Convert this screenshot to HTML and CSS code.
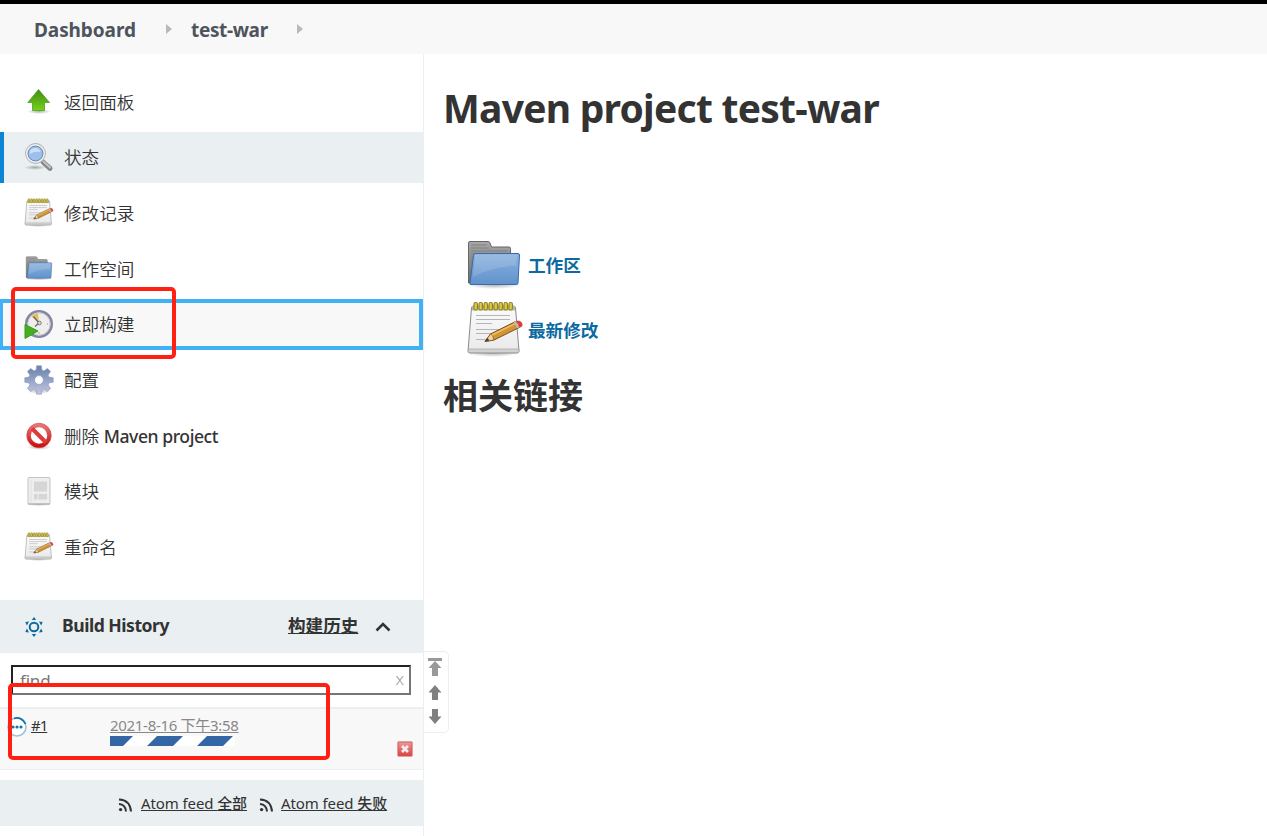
FILE: index.html
```html
<!DOCTYPE html>
<html lang="zh-CN">
<head>
<meta charset="utf-8">
<title>test-war [Jenkins]</title>
<link rel="stylesheet" href="styles.css">
</head>
<body>
<svg class="defs" width="0" height="0" aria-hidden="true">
  <defs>
    <linearGradient id="green" x1="0" y1="0" x2="0" y2="1"><stop offset="0" stop-color="#3f8b16"/><stop offset="1" stop-color="#73d216"/></linearGradient>
    <linearGradient id="blue" x1="0" y1="0" x2="0" y2="1"><stop offset="0" stop-color="#8db3df"/><stop offset="1" stop-color="#5f92cc"/></linearGradient>
    <linearGradient id="gray" x1="0" y1="0" x2="0" y2="1"><stop offset="0" stop-color="#a8a8a8"/><stop offset="1" stop-color="#6a6a6a"/></linearGradient>
    <linearGradient id="paper" x1="0" y1="0" x2="0" y2="1"><stop offset="0" stop-color="#fbfbfb"/><stop offset="1" stop-color="#e9e9e9"/></linearGradient>
    <linearGradient id="gear" x1="0" y1="0" x2="0" y2="1"><stop offset="0" stop-color="#6580ae"/><stop offset="1" stop-color="#c5c5e0"/></linearGradient>
    <linearGradient id="red" x1="0" y1="0" x2="0" y2="1"><stop offset="0" stop-color="#e87474"/><stop offset="1" stop-color="#cc1111"/></linearGradient>
    <linearGradient id="stop" x1="0" y1="0" x2="0" y2="1"><stop offset="0" stop-color="#eba0a0"/><stop offset="1" stop-color="#d93c3c"/></linearGradient>
    <radialGradient id="shade"><stop offset="0" stop-color="#000" stop-opacity=".3"/><stop offset="1" stop-color="#000" stop-opacity="0"/></radialGradient>
    <symbol id="folder" viewBox="0 0 54 50">
      <ellipse cx="27" cy="45" rx="27" ry="4" fill="url(#shade)"/>
      <path d="M1.500 43V3q0-1.500 1.500-1.500h18q1.500 0 2 1.500l1.500 4H42q1.500 0 1.500 1.500V43z" fill="url(#gray)" stroke="#666"/>
      <path d="M4 5h16M4 8h18M4 11h37M4 14h3M4 17h2M4 20h2M4 23h2M4 26h2M4 29h1" stroke="#7a7a7a" stroke-width=".8"/>
      <path d="M6.500 15.500q0-2 1.500-2h43q1.500 0 1.500 1.500l-1.500 28q0 1.500-1.500 1.500H4q-1.500 0-1-1.500z" fill="url(#blue)" stroke="#3a6aa9"/>
      <path d="M8 16q0-1.500 1-1.500h41l-.8 11Q25 27 6 37z" fill="#fff" opacity=".13"/>
    </symbol>
    <symbol id="notepad" viewBox="0 0 56 56">
      <ellipse cx="26" cy="52" rx="26" ry="4" fill="url(#shade)"/>
      <path d="M6.500 5h40q2 0 2 2l3.500 43q0 2-2 2H3q-2 0-2-2L4.500 7q0-2 2-2z" fill="url(#paper)" stroke="#8a8a8a"/>
      <path d="M1.500 48h50.300l.2 2q0 1.500-1.500 1.500H2.500Q.8 51.500 1.300 50z" fill="#d2d2d2" stroke="#a5a5a5" stroke-width=".7"/>
      <path d="M5 5h43v4.500H5z" fill="#b8b8a8"/>
      <g fill="#dccb48" stroke="#8f8020" stroke-width="1.100"><rect x="7" y="1.500" width="3.400" height="7.500" rx="1.400"/><rect x="12" y="1.500" width="3.400" height="7.500" rx="1.400"/><rect x="17" y="1.500" width="3.400" height="7.500" rx="1.400"/><rect x="22" y="1.500" width="3.400" height="7.500" rx="1.400"/><rect x="27" y="1.500" width="3.400" height="7.500" rx="1.400"/><rect x="32" y="1.500" width="3.400" height="7.500" rx="1.400"/><rect x="37" y="1.500" width="3.400" height="7.500" rx="1.400"/><rect x="42" y="1.500" width="3.400" height="7.500" rx="1.400"/></g>
      <path d="M9 14.500h34M9 18.500h34M9 22.500h16M9 28.500h26M9 32.500h20M9 38.500h12" stroke="#b5b5b5" stroke-width="1.200"/>
      <path d="M18 40.500l5.500-7.500L48 20.800q3 1 4.300 5.700L27 39z" fill="#d29435" stroke="#785018"/>
      <path d="M18 40.500l5.500-7.500q3 1.500 3.500 6z" fill="#efd3a0" stroke="#785018" stroke-width=".7"/><path d="M18 40.500l2.500-3.500 1.800 2.300z" fill="#333"/>
      <path d="M25 34l23-11.300" stroke="#f0bf66" stroke-width="1.500"/>
      <path d="M46.500 21.500l2.500-1.200 4 5.700-2.500 1.300z" fill="#bbb"/><path d="M49 20.300q5.500-1.500 6.300 3.700l-.8 1.500-2 1q-.5-4-3.500-6.200z" fill="#e33b35" stroke="#c93a34" stroke-width=".6"/>
    </symbol>
    <symbol id="feed" viewBox="0 0 14 14"><circle cx="2.600" cy="11.600" r="1.700" fill="#333"/><path d="M1 6q6.500.5 7 7.500M1 1.500q11 .5 12 12" fill="none" stroke="#333" stroke-width="2"/></symbol>
  </defs>
</svg>

<header class="crumbs">
  <a class="crumb crumb-home">Dashboard</a>
  <svg class="sep" width="6" height="10"><path d="M0 0l6 5-6 5z" fill="#b9b9b9"/></svg>
  <a class="crumb crumb-job">test-war</a>
  <svg class="sep" width="6" height="10"><path d="M0 0l6 5-6 5z" fill="#b9b9b9"/></svg>
</header>

<div class="page">
  <aside class="side">
    <nav class="tasks">
      <a class="task">
        <svg class="icon" viewBox="0 0 30 30"><ellipse cx="15" cy="24.500" rx="12" ry="2.500" fill="url(#shade)"/><path d="M14.500 2.500L25.500 15.500H20.500v8H8.500v-8H3.800z" fill="url(#green)" stroke="#52a01c" stroke-width=".8"/></svg>
        <span>返回面板</span></a>
      <a class="task active">
        <svg class="icon" viewBox="0 0 30 30"><ellipse cx="11" cy="25.500" rx="11" ry="2.500" fill="url(#shade)"/><path d="M19 20l7 6.300" stroke="#858585" stroke-width="5" stroke-linecap="round"/><path d="M19.500 19.500l6.500 6" stroke="#c4c4c4" stroke-width="2" stroke-linecap="round"/><circle cx="11.500" cy="11.500" r="9" fill="#9dc0ea" stroke="#b0b0b0" stroke-width="2.800"/><circle cx="11.500" cy="11.500" r="8.700" fill="none" stroke="#efefef" stroke-width="1.700"/><circle cx="11.500" cy="11.500" r="7.400" fill="none" stroke="#6389c0" stroke-width=".9"/><path d="M5.500 12q0-6 6-6 4 0 5 4-6-1-11 2z" fill="#d8e8fa" opacity=".8"/></svg>
        <span>状态</span></a>
      <a class="task"><svg class="icon icon-note"><use href="#notepad"/></svg><span>修改记录</span></a>
      <a class="task"><svg class="icon icon-folder"><use href="#folder"/></svg><span>工作空间</span></a>
      <a class="task focused">
        <svg class="icon" viewBox="0 0 30 30"><circle cx="15" cy="15" r="12.700" fill="#eeeeec" stroke="#8585a6" stroke-width="2.600"/><circle cx="15" cy="15" r="11.200" fill="none" stroke="#c9c9c9"/><path d="M15 14L7.500 7.500Q10 4.500 14 4z" fill="#e5c05c"/><path d="M15 14L9.500 7.500M15 14l-4 3.500" stroke="#666" stroke-width="1.200"/><circle cx="15.500" cy="14" r="1.800" fill="#ddd" stroke="#666" stroke-width=".8"/><circle cx="23.500" cy="15" r=".7" fill="#aaa"/><path d="M15 23v2" stroke="#aaa"/><path d="M1 15.500L14 22 1 29.500z" fill="#46b01c" stroke="#3d9820"/></svg>
        <span>立即构建</span></a>
      <a class="task">
        <svg class="icon" viewBox="0 0 30 30"><ellipse cx="15" cy="26" rx="11" ry="3" fill="url(#shade)"/><path d="M12.700.8h4.600l.6 4.200 2.100.9 3.400-2.500 3.200 3.200-2.500 3.400.9 2.100 4.200.6v4.600l-4.200.6-.9 2.100 2.500 3.400-3.200 3.200-3.400-2.500-2.100.9-.6 4.200h-4.600l-.6-4.200-2.100-.9-3.400 2.500-3.200-3.200 2.500-3.400-.9-2.100-4.200-.6v-4.600l4.200-.6.9-2.100-2.500-3.400 3.200-3.200L10 5.900l2.100-.9zM15 10.600a4.400 4.400 0 1 0 0 8.800 4.400 4.400 0 1 0 0-8.800z" fill="url(#gear)" stroke="#8495ba" stroke-width=".6" fill-rule="evenodd"/></svg>
        <span>配置</span></a>
      <a class="task">
        <svg class="icon" viewBox="0 0 30 30"><ellipse cx="15" cy="26" rx="12" ry="3" fill="url(#shade)"/><circle cx="15" cy="14.500" r="10.200" fill="#fff" stroke="url(#red)" stroke-width="4"/><path d="M8 7.500l14 14" stroke="#dc3c3c" stroke-width="4"/><circle cx="15" cy="14.500" r="12.300" fill="none" stroke="#cf4040" stroke-width=".6"/></svg>
        <span>删除 <b class="latin">Maven project</b></span></a>
      <a class="task">
        <svg class="icon" viewBox="0 0 30 30"><ellipse cx="15" cy="28.500" rx="12" ry="1.500" fill="url(#shade)"/><rect x="4" y="1.500" width="22" height="26.500" rx="1" fill="#eee" stroke="#c4c4c4"/><path d="M4 28h22" stroke="#aaa"/><path d="M10 5.500h13v10H10zM10 18h3.500v5.500H10zM14.500 18H23v5.500h-8.500z" fill="#d6d6d6"/><path d="M7 4v22" stroke="#e0e0e0"/></svg>
        <span>模块</span></a>
      <a class="task"><svg class="icon icon-note"><use href="#notepad"/></svg><span>重命名</span></a>
    </nav>

    <section class="history">
      <div class="history-head">
        <svg class="sun" width="20" height="20" viewBox="0 0 20 20"><circle cx="10" cy="10" r="4.300" fill="none" stroke="#0b6aa2" stroke-width="2"/><g fill="#0b6aa2"><path id="ray" d="M7.800 3L10 0l2.200 3z"/><use href="#ray" transform="rotate(60 10 10)"/><use href="#ray" transform="rotate(120 10 10)"/><use href="#ray" transform="rotate(180 10 10)"/><use href="#ray" transform="rotate(240 10 10)"/><use href="#ray" transform="rotate(300 10 10)"/></g></svg>
        <span class="history-title">Build History</span>
        <a class="trend">构建历史</a>
        <svg class="chev" width="16" height="12" viewBox="0 0 16 12"><path d="M1.500 9.500L8 3l6.500 6.500" fill="none" stroke="#333" stroke-width="2.500"/></svg>
      </div>
      <div class="find"><span class="find-text">find</span><span class="find-clear">x</span></div>
      <div class="build">
        <svg class="ball" width="20" height="20" viewBox="0 0 20 20"><circle cx="10" cy="10" r="9" fill="#fff" stroke="#9fc3da" stroke-width="1.600"/><path d="M7 1.500A9 9 0 0 1 18.500 7" fill="none" stroke="#1375ab" stroke-width="1.800"/><g fill="#1375ab"><circle cx="6" cy="10" r="1.600"/><circle cx="10" cy="10" r="1.600"/><circle cx="14" cy="10" r="1.600"/></g></svg>
        <a class="build-no">#1</a>
        <div class="build-main">
          <a class="build-date">2021-8-16 下午3:58</a>
          <svg class="progress" width="125" height="10"><path d="M0 0h23L13 10H0zM47 0h26L63 10H37zM97 0h26l-10 10H87z" fill="#3465a4"/></svg>
        </div>
        <svg class="stop" width="16" height="16" viewBox="0 0 16 16"><rect x=".5" y=".5" width="15" height="15" rx="1.500" fill="url(#stop)" stroke="#dfa0a0"/><rect x="1.500" y="1.500" width="13" height="13" fill="none" stroke="#d95555" opacity=".5"/><path d="M5 5l6 6M11 5l-6 6" stroke="#f6eeee" stroke-width="2.600"/></svg>
      </div>
      <div class="feeds">
        <svg class="feed"><use href="#feed"/></svg><a class="feed-all">Atom feed <b>全部</b></a>
        <svg class="feed feed2"><use href="#feed"/></svg><a class="feed-fail">Atom feed <b>失败</b></a>
      </div>
    </section>
    <div class="pager">
      <svg width="14" height="18" viewBox="0 0 14 18"><path d="M0 0h14v3H0zM7 3l6.500 7H10v8H4v-8H.5z" fill="#999"/></svg>
      <svg width="14" height="15" viewBox="0 0 14 15"><path d="M7 0l6.500 7.500H10V15H4V7.500H.5z" fill="#808080"/></svg>
      <svg width="14" height="15" viewBox="0 0 14 15"><path d="M7 15l6.500-7.500H10V0H4v7.500H.5z" fill="#808080"/></svg>
    </div>
  </aside>

  <main class="main">
    <h1>Maven project test-war</h1>
    <div class="links">
      <a class="link"><svg class="big"><use href="#folder" width="54" height="50" y="3"/></svg><span class="up">工作区</span></a>
      <a class="link"><svg class="big"><use href="#notepad"/></svg><span>最新修改</span></a>
    </div>
    <h2>相关链接</h2>
  </main>
</div>
<div class="mark mark-task"></div>
<div class="mark mark-build"></div>
</body>
</html>
```

FILE: styles.css
```css
* { box-sizing: border-box; }
body { margin: 0; height: 836px; overflow: hidden; background: #fff; color: #333; font-family: "Noto Sans", "Noto Sans CJK SC", sans-serif; font-size: 17.6px; }
svg { display: block; flex: none; }
.defs { position: absolute; }
a { color: inherit; white-space: nowrap; }
.crumbs { height: 54px; border-top: 4px solid #000; background: #f8f8f8; display: flex; align-items: center; padding: 0 0 0 34px; color: #4d545d; font-weight: 700; font-size: 19px; }
.crumb { line-height: 26px; margin-top: 2px; }
.crumb-home { width: 132px; letter-spacing: -.08px; }
.crumb-job { width: 84px; margin-left: 19px; letter-spacing: -.35px; }
.crumbs .sep:last-child { margin-left: 22px; }
.page { display: flex; height: 782px; }
.side { position: relative; width: 424px; flex: none; border-right: 1px solid #eaeff2; padding-top: 22.300px; }
.tasks { display: flex; flex-direction: column; gap: 4.670px; }
.task { height: 51px; display: flex; align-items: center; padding-left: 24px; gap: 10px; font-weight: 350; }
.task span { line-height: 26px; }
.active { background: #eaeff2; border-left: 4px solid #0b84d3; padding-left: 20px; }
.focused { background: #f8f8f8; border: 4px solid #40b1f4; border-left-width: 3px; padding-left: 21px; }
.icon { width: 30px; height: 30px; }
.icon-folder { height: 25px; }
.icon-note { height: 29px; margin-bottom: 1px; }
.latin { font-weight: 500; letter-spacing: -.45px; }
.history { margin-top: 27px; }
.history-head { height: 53px; background: #eaeff2; display: flex; align-items: center; padding-left: 24px; font-weight: 700; }
.sun { margin-top: 2px; }
.history-title { margin-left: 18px; width: 226px; font-weight: 700; letter-spacing: -.5px; line-height: 26px; padding-bottom: 3px; }
.trend { text-decoration: underline; margin-bottom: 4px; }
.chev { margin: 1px 0 0 17px; }
.find { height: 30px; margin: 12px 12px 12px 11px; border: 2px solid #767676; border-top-color: #222; border-left-color: #222; display: flex; align-items: center; justify-content: space-between; padding: 2px 5px 0 7px; color: #777; line-height: 24px; }
.find-text { font-size: 17px; letter-spacing: -.2px; }
.find-clear { font-size: 17px; color: #999; font-weight: 300; padding-bottom: 3px; }
.build { height: 63px; background: #f8f8f8; border-top: 2px solid #eaeff2; border-bottom: 1px solid #eaeff2; display: flex; padding: 8px 0 0 7px; font-size: 15px; }
.build-no { text-decoration: underline; margin: -1px 0 0 4px; width: 79px; line-height: 18px; letter-spacing: -1px; }
.build-date { display: block; text-decoration: underline; color: #888; line-height: 18px; height: 20px; margin-top: -1px; letter-spacing: -.3px; }
.progress { background: #fff; }
.build-main { width: 287px; }
.stop { margin-top: 24px; }
.feeds { margin-top: 10px; height: 46px; background: #eaeff2; display: flex; align-items: center; padding: 1px 0 0 118px; font-size: 15px; }
.feeds a { text-decoration: underline; line-height: 22px; letter-spacing: -.1px; }
.feeds b { font-weight: 500; }
.feed { width: 14px; height: 14px; margin: 3px 9px 0 0; }
.feed2 { margin-left: 12px; margin-right: 8px; }
.pager { position: absolute; left: 423px; top: 597px; width: 26px; height: 82px; background: #fff; border: 1px solid #eaeff2; border-radius: 0 5px 5px 0; padding: 6px 0 0 4px; display: flex; flex-direction: column; gap: 9px; }
.main { flex: 1; padding: 28px 0 0 19px; }
h1 { margin: 0; font-size: 39px; line-height: 52px; font-weight: 700; letter-spacing: -.75px; white-space: nowrap; }
.links { padding: 103px 0 0 24px; display: flex; flex-direction: column; gap: 8px; }
.link { display: flex; align-items: center; gap: 5px; color: #0b6aa2; font-weight: 700; height: 56px; }
.up { margin-bottom: 2px; }
.big { width: 56px; height: 56px; }
h2 { margin: 13px 0 0; font-size: 35px; line-height: 52px; }
.mark { position: absolute; border: 4px solid #ff2012; border-radius: 5px; }
.mark-task { left: 11px; top: 287px; width: 165px; height: 72px; }
.mark-build { left: 8px; top: 683px; width: 322px; height: 77px; }
```
